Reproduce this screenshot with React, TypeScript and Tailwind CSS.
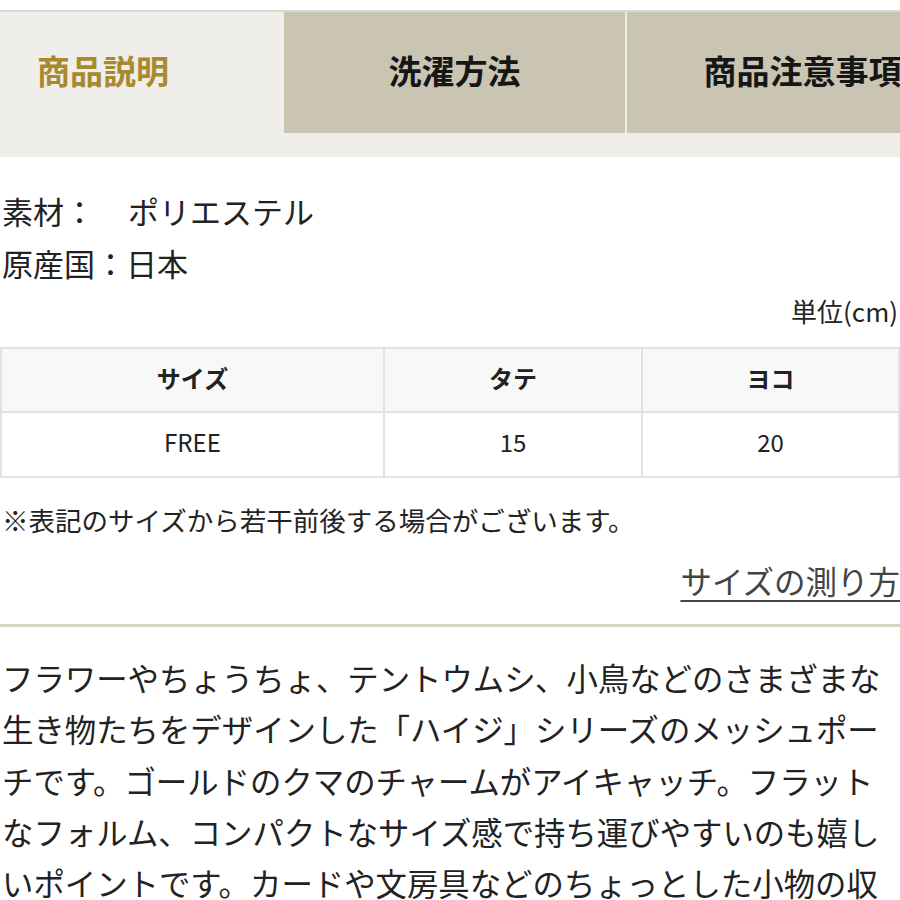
import React from 'react';

// --- Data ---
const tabs = [
  { label: '洗濯方法' },
  { label: '商品注意事項' },
];

const sizeRows = [{ size: 'FREE', tate: '15', yoko: '20' }];

const description = [
  'フラワーやちょうちょ、テントウムシ、小鳥などのさまざまな',
  '生き物たちをデザインした「ハイジ」シリーズのメッシュポー',
  'チです。ゴールドのクマのチャームがアイキャッチ。フラット',
  'なフォルム、コンパクトなサイズ感で持ち運びやすいのも嬉し',
  'いポイントです。カードや文房具などのちょっとした小物の収',
];

const App: React.FC = () => {
  return (
    <div className="w-[900px] h-[900px] overflow-hidden bg-white text-[#222] font-['Noto_Sans_CJK_JP',sans-serif] flex flex-col">
      <div className="h-[10px] shrink-0" />

      {/* Tabs */}
      <div className="shrink-0 border-t-2 border-[#d9d9d3] bg-[#efeeea] pb-[24px]">
        <div className="flex h-[121px] overflow-hidden">
          <div className="w-[284px] shrink-0 flex items-center pl-[37px] pb-[4px] text-[33px] font-bold text-[#a8892c] shadow-[2px_0_2px_rgba(0,0,0,0.06)]">
            商品説明
          </div>
          <div className="w-[341px] shrink-0 flex items-center justify-center pb-[4px] bg-[#c9c5b2] text-[33px] font-bold text-[#161616]">
            {tabs[0].label}
          </div>
          <div className="w-[2px] shrink-0 bg-[#f1eee6]" />
          <div className="w-[341px] shrink-0 flex items-center justify-center pb-[4px] pl-[10px] bg-[#c9c5b2] text-[33px] font-bold text-[#161616] whitespace-nowrap">
            {tabs[1].label}
          </div>
        </div>
      </div>

      {/* Spec */}
      <div className="mt-[28px] text-[31px] leading-[52px] pl-[2px]">
        <div className="flex">
          <span className="w-[126px]">素材：</span>
          <span>ポリエステル</span>
        </div>
        <div>原産国：日本</div>
      </div>

      <div className="mt-[2px] text-right text-[26px] leading-[40px] pr-[2px]">単位(cm)</div>

      {/* Size table */}
      <table className="mt-[16px] w-[900px] border-collapse text-[24px] table-fixed">
        <thead>
          <tr className="bg-[#f8f8f8]">
            <th className="w-[383px] h-[64px] pb-[4px] border-2 border-[#e2e2e2] font-bold text-center">サイズ</th>
            <th className="w-[258px] h-[64px] pb-[4px] border-2 border-[#e2e2e2] font-bold text-center">タテ</th>
            <th className="h-[64px] pb-[4px] border-2 border-[#e2e2e2] font-bold text-center">ヨコ</th>
          </tr>
        </thead>
        <tbody>
          {sizeRows.map(r => (
            <tr key={r.size}>
              <td className="h-[65px] pb-[6px] border-2 border-[#e2e2e2] text-center">{r.size}</td>
              <td className="h-[65px] pb-[6px] border-2 border-[#e2e2e2] text-center">{r.tate}</td>
              <td className="h-[65px] pb-[6px] border-2 border-[#e2e2e2] text-center">{r.yoko}</td>
            </tr>
          ))}
        </tbody>
      </table>

      <div className="mt-[22px] text-[26.5px] leading-[40px] pl-[2px]">※表記のサイズから若干前後する場合がございます。</div>

      <div className="mt-[20px] flex justify-end">
        <span className="text-[31.5px] leading-[40px] text-[#444] underline underline-offset-[6px] decoration-2 whitespace-nowrap">
          サイズの測り方
        </span>
      </div>

      <div className="mt-[24px] h-[3px] shrink-0 bg-[#d4d6c6]" />

      {/* Description */}
      <div className="mt-[25px] text-[31.4px] leading-[51.3px] pl-[2px] whitespace-nowrap">
        {description.map(line => (
          <div key={line}>{line}</div>
        ))}
      </div>
    </div>
  );
};

export default App;
